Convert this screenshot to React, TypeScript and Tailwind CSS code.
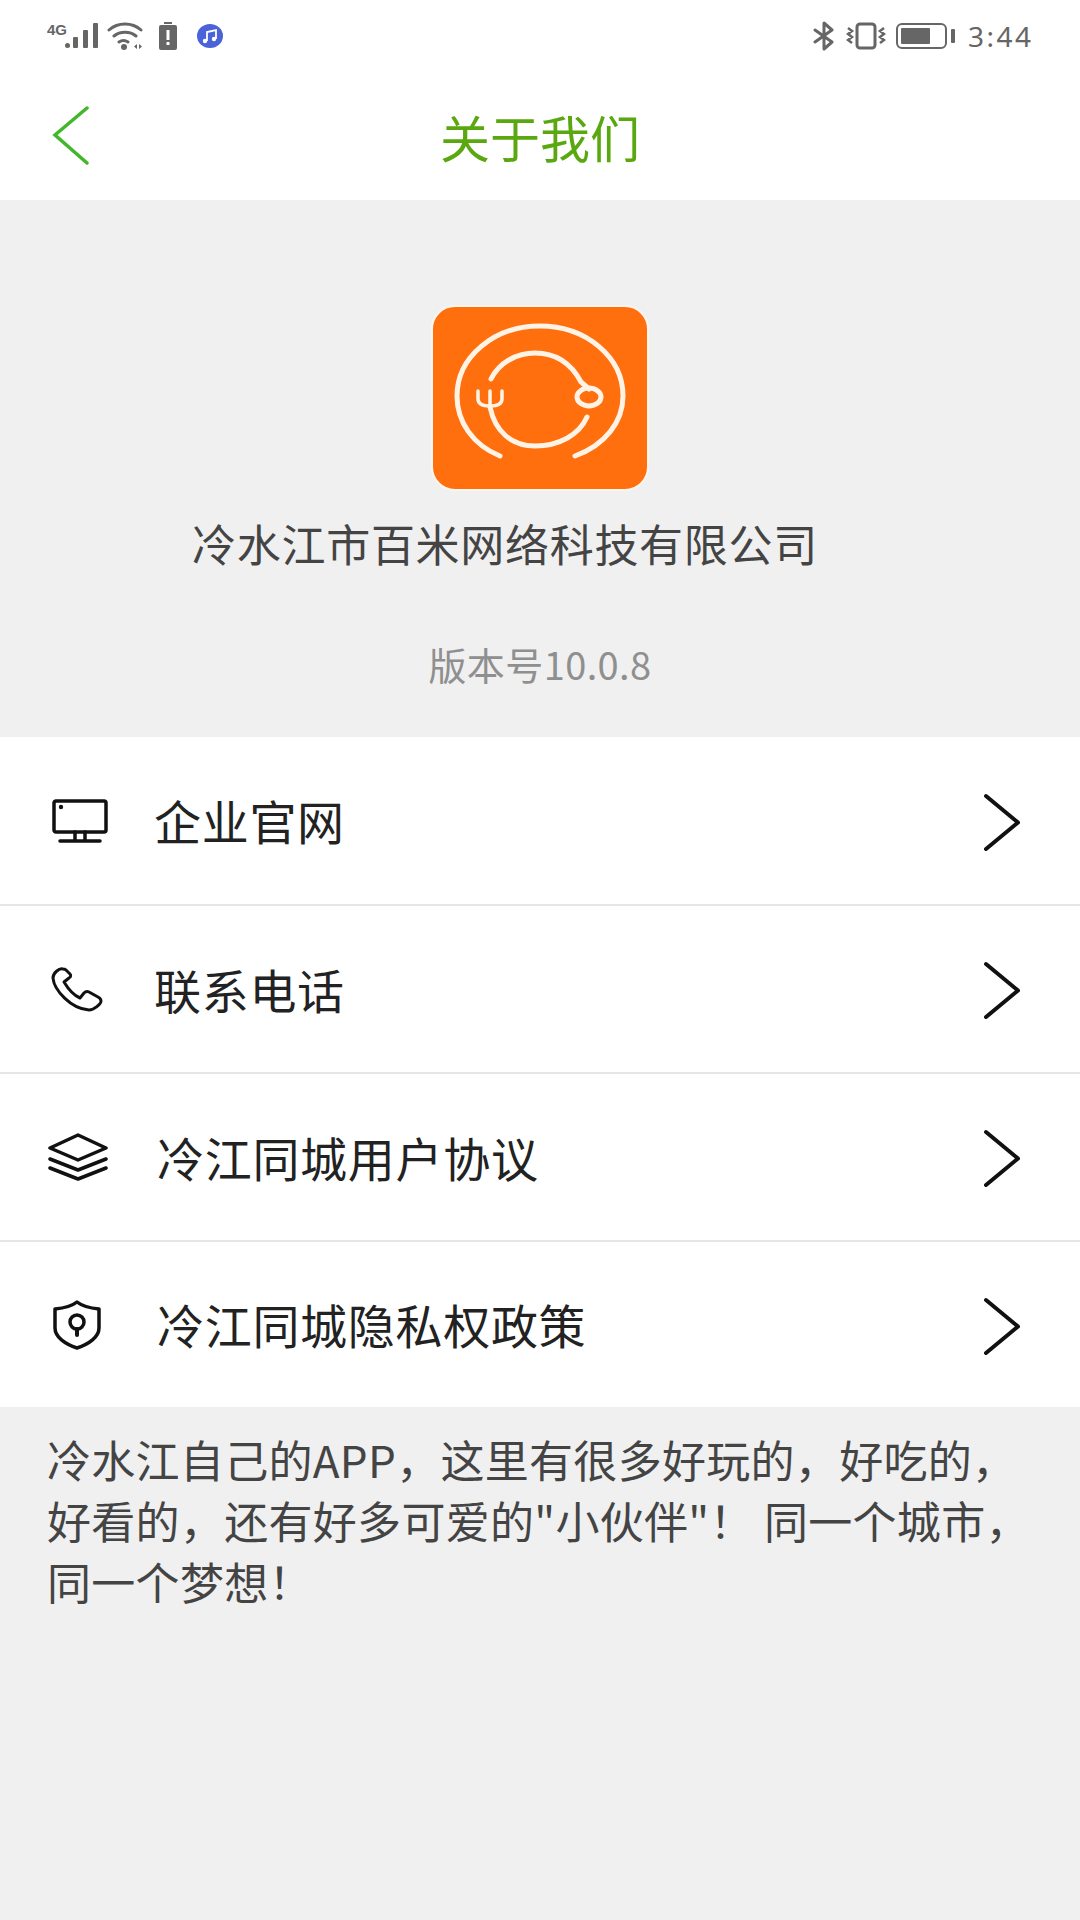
const font = "font-['Noto_Sans_CJK_SC','Noto_Sans',sans-serif]";

const MonitorIcon = () => (
  <svg width="56" height="44" viewBox="0 0 56 44" fill="none" stroke="#111" strokeWidth="3.5" strokeLinecap="round" strokeLinejoin="round">
    <rect x="2" y="2" width="52" height="31" rx="2" />
    <circle cx="9" cy="8" r="2.200" fill="#111" stroke="none" />
    <path d="M23 33v9M33 33v9M8 42h40" />
  </svg>
);

const PhoneIcon = () => (
  <svg width="52" height="46" viewBox="0 0 52 46" fill="none" stroke="#111" strokeWidth="3" strokeLinejoin="round">
    <path d="M12 3C8 2 2 7 2 12c1 12 18 31 36 32 5 0 12-6 12-9 0-2-1-3-3-4l-9-5c-2-1-4 0-5 1l-4 5c-7-3-13-11-16-16l5-4c2-1 2-3 1-4l-4-4c-1-1-2-1-3-1z" />
  </svg>
);

const LayersIcon = () => (
  <svg width="60" height="48" viewBox="0 0 60 48" fill="none" stroke="#111" strokeWidth="3.5" strokeLinejoin="round" strokeLinecap="round">
    <path d="M30 2 58 15 30 27 2 15 30 2z" />
    <path d="M2 26l28 11 28-11" />
    <path d="M2 35l28 11 28-11" />
  </svg>
);

const ShieldIcon = () => (
  <svg width="50" height="50" viewBox="0 0 50 50" fill="none" stroke="#111" strokeWidth="3.5" strokeLinejoin="round" strokeLinecap="round">
    <path d="M25 2c5 4 12 6 22 7v19c0 9-10 16-22 20C13 44 3 37 3 28V9c10-1 17-3 22-7z" />
    <circle cx="25" cy="22" r="7" />
    <path d="M25 29v6" strokeWidth="4" />
  </svg>
);

const Chevron = () => (
  <svg width="38" height="59" viewBox="0 0 38 59" fill="none" stroke="#111" strokeWidth="4" strokeLinecap="round" strokeLinejoin="round" className="mt-[3px]">
    <path d="M3 3 35 29.500 3 56" />
  </svg>
);

const rows = [
  { label: "企业官网", icon: <MonitorIcon />, rowClass: "h-[167px] pl-[52px]", textClass: "ml-[46px]" },
  { label: "联系电话", icon: <PhoneIcon />, rowClass: "h-[168px] pl-[51px] border-t-2 border-[#e6e6e6]", textClass: "ml-[51px]" },
  { label: "冷江同城用户协议", icon: <LayersIcon />, rowClass: "h-[168px] pl-[48px] border-t-2 border-[#e6e6e6]", textClass: "ml-[49px]" },
  { label: "冷江同城隐私权政策", icon: <ShieldIcon />, rowClass: "h-[167px] pl-[52px] border-t-2 border-[#e6e6e6]", textClass: "ml-[55px]" },
];

const StatusBar = () => (
  <div className="h-[72px] flex items-center justify-between pl-[47px] pr-[46px] bg-white">
    <div className="flex items-center">
      <svg width="52" height="28" viewBox="0 0 52 28" fill="#666">
        <text x="0" y="13" fontSize="15" fontWeight="700" fontFamily="Liberation Sans Narrow, Liberation Sans">4G</text>
        <rect x="18" y="21" width="5" height="5" rx="2.500" />
        <rect x="26" y="15" width="5" height="11" rx="1" />
        <rect x="36" y="8" width="5" height="18" rx="1" />
        <rect x="46" y="1" width="5" height="25" rx="1" />
      </svg>
      <svg width="36" height="28" viewBox="0 0 36 28" fill="none" stroke="#666" strokeWidth="3" strokeLinecap="round" className="ml-[8px]">
        <path d="M2 8c9-8 23-8 32 0M7 14c6-5 16-5 22 0M12 20c3-2 6-2 9 0" />
        <circle cx="17" cy="25" r="3" fill="#666" stroke="none" />
        <path d="M30 22v5l-3-2.500zM32 22v5l3-2.500z" fill="#666" stroke="none" />
      </svg>
      <svg width="18" height="28" viewBox="0 0 18 28" className="ml-[16px]">
        <rect x="5" y="0" width="8" height="2" fill="#666" />
        <rect x="0" y="3" width="18" height="25" rx="2" fill="#666" />
        <rect x="7.500" y="8" width="3" height="10" fill="#fff" />
        <rect x="7.500" y="20" width="3" height="3" fill="#fff" />
      </svg>
      <svg width="26" height="24" viewBox="0 0 26 24" className="ml-[20px]">
        <ellipse cx="13" cy="12" rx="13" ry="12" fill="#4a63d8" />
        <path d="M10 17V8l9-2v9" fill="none" stroke="#fff" strokeWidth="1.800" />
        <circle cx="8" cy="17" r="2.200" fill="#fff" />
        <circle cx="17" cy="15" r="2.200" fill="#fff" />
      </svg>
    </div>
    <div className="flex items-center">
      <svg width="22" height="30" viewBox="0 0 22 30" fill="none" stroke="#666" strokeWidth="3" strokeLinejoin="round" strokeLinecap="round">
        <path d="M2 9l17 12-8 7V2l8 7L2 21" />
      </svg>
      <svg width="40" height="28" viewBox="0 0 40 28" fill="none" stroke="#666" strokeWidth="3" className="ml-[11px]">
        <rect x="11" y="2" width="18" height="24" rx="3" />
        <path d="M2 6l4 3-4 3 4 3-4 3 4 3M38 6l-4 3 4 3-4 3 4 3-4 3" strokeWidth="2.500" />
      </svg>
      <div className="ml-[10px] w-[51px] h-[26px] rounded-[6px] border-[2.5px] border-[#666] p-[3px]">
        <div className="w-[29px] h-full bg-[#666] rounded-[1px]" />
      </div>
      <div className="ml-[4px] w-[4px] h-[14px] bg-[#666] rounded-[1px]" />
      <span className="ml-[13px] w-[66px] text-[28px] leading-none tracking-[2.5px] text-[#666] font-['Noto_Sans',sans-serif]">3:44</span>
    </div>
  </div>
);

export default function App() {
  return (
    <div className={`w-[1080px] h-[1920px] bg-[#f0f0f0] ${font} overflow-hidden`}>
      <StatusBar />
      <div className="relative h-[128px] bg-white flex items-center justify-center">
        <svg width="38" height="60" viewBox="0 0 38 60" fill="none" stroke="#43b72c" strokeWidth="3.500" strokeLinecap="round" className="absolute left-[52px] top-[34px]">
          <path d="M35 2 3 29l32 28" />
        </svg>
        <span className="text-[50px] leading-none text-[#5aa80f]">关于我们</span>
      </div>

      <div className="h-[537px] flex flex-col items-center pt-[105px]">
        <div className="w-[218px] h-[186px] rounded-[24px] bg-[#ff6f0e] border-[2px] border-[#fdf6ee] flex items-center justify-center">
          <svg width="214" height="182" viewBox="0 0 214 182" fill="none" stroke="#fff3e6" strokeWidth="5" strokeLinecap="round">
            <path d="M67 149C40 138 24 115 24 89 24 50 61 19 107 19s83 31 83 70c0 26-18 49-48 60" />
            <path d="M58 72c8-16 25-26 44-26 20 0 36 10 46 29l8 7" />
            <path d="M154 110c-8 18-28 29-52 29-24 0-40-15-45-39" />
            <ellipse cx="156" cy="90" rx="12" ry="9" />
            <path d="M45 84v8c0 5 4 7 12 7s12-2 12-7v-8M57 84v16" strokeWidth="3.500" />
          </svg>
        </div>
        <div className="mt-[25px] -ml-[70px] text-[44px] leading-[54px] tracking-[0.7px] text-[#444]">冷水江市百米网络科技有限公司</div>
        <div className="mt-[70px] text-[38px] leading-[48px] tracking-[0.4px] text-[#8f8f8f]">版本号10.0.8</div>
      </div>

      <div className="bg-white">
        {rows.map((row) => (
          <div key={row.label} className={`${row.rowClass} flex items-center pr-[59px]`}>
            {row.icon}
            <span className={`${row.textClass} flex-1 pb-[2px] text-[47px] leading-none tracking-[0.7px] text-[#222]`}>{row.label}</span>
            <Chevron />
          </div>
        ))}
      </div>

      <p className="px-[47px] pt-[22px] text-[44px] leading-[61px] tracking-[0.3px] text-[#444]">
        冷水江自己的APP，这里有很多好玩的，好吃的，好看的，还有好多可爱的"小伙伴"！ 同一个城市，同一个梦想！
      </p>
    </div>
  );
}
